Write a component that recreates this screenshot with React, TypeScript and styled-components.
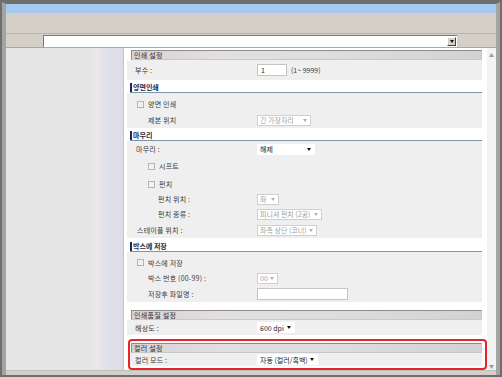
import React from "react";
import styled, { createGlobalStyle } from "styled-components";

const GlobalStyle = createGlobalStyle`
  html, body {
    margin: 0;
    padding: 0;
    background: #ffffff;
  }
  body {
    font-family: "Noto Sans CJK KR", "Noto Sans", sans-serif;
  }
`;

const Frame = styled.div`
  box-sizing: border-box;
  width: 502px;
  height: 377px;
  border: 2px solid #6e6e6e;
  overflow: hidden;
`;

const Window = styled.div`
  box-sizing: border-box;
  height: 100%;
  display: flex;
  flex-direction: column;
  background: #d4d0c8;
  border-top: 2px solid #6e6e6e;
  border-left: 4px solid #a4a4a4;
  border-right: 4px solid #a4a4a4;
`;

const TitleBar = styled.div`
  height: 9px;
  background: #a6c9ef;
`;

const Toolbar = styled.div`
  height: 20px;
  background: #d4d0c8;
  border-bottom: 1px solid #b8b4ac;
`;

const AddressRow = styled.div`
  height: 13px;
  display: flex;
  align-items: center;
  padding-left: 37px;
  border-bottom: 1px solid #a8a8a8;
`;

const Combo = styled.div`
  box-sizing: border-box;
  width: 414px;
  height: 12px;
  background: #ffffff;
  border-top: 1px solid #7a7a7a;
  border-left: 1px solid #7a7a7a;
  display: flex;
  justify-content: flex-end;
  align-items: center;
  padding-right: 1px;
`;

const ComboButton = styled.div`
  box-sizing: border-box;
  width: 9px;
  height: 9px;
  background: #d4d0c8;
  border: 1px solid;
  border-color: #ffffff #404040 #404040 #ffffff;
  display: flex;
  align-items: center;
  justify-content: center;
`;

const Arrow = styled.span<{ $color?: string }>`
  width: 0;
  height: 0;
  border-left: 2.5px solid transparent;
  border-right: 2.5px solid transparent;
  border-top: 3px solid ${(p) => p.$color ?? "#111"};
`;

const Content = styled.div`
  flex: 1;
  display: flex;
  min-height: 0;
`;

const SidePanel = styled.div`
  width: 117px;
  background: linear-gradient(
    to right,
    #e5e5e5 0%,
    #e5e5e5 72%,
    #ebe7eb 78%,
    #e0e0e8 86%,
    #dcdde7 100%
  );
  border-right: 1px solid #c4c4c4;
`;

const MainPanel = styled.div`
  flex: 1;
  display: flex;
  background: #ffffff;
  min-width: 0;
`;

const Sheet = styled.div`
  flex: 1;
  padding: 2px 5px 0 3px;
  display: flex;
  flex-direction: column;
`;

const Scrollbar = styled.div`
  width: 9px;
  background: #f3f3f3;
  display: flex;
  flex-direction: column;
  justify-content: space-between;
  align-items: center;
  padding: 4px 0 2px;
  font-size: 5px;
  color: #9a9a9a;
  line-height: 1;
`;

const GrayHeader = styled.div<{ $indent?: number }>`
  box-sizing: border-box;
  height: 10px;
  margin-left: ${(p) => p.$indent ?? 4}px;
  border: 1px solid;
  border-color: #8c8c8c #c8c8c8 #c8c8c8 #8c8c8c;
  background: linear-gradient(
    to right,
    #d6d2d5 0%,
    #e2dee1 25%,
    #dedede 55%,
    #d2d2d2 100%
  );
  font-size: 7px;
  line-height: 8px;
  color: #333333;
  padding-left: 2px;
  letter-spacing: 0.3px;
`;

const BlueHeader = styled.div<{ $gap: number }>`
  box-sizing: border-box;
  margin-top: ${(p) => p.$gap}px;
  margin-left: 3px;
  height: 11px;
  border-bottom: 1px solid #7f93a8;
  display: flex;
  align-items: center;
  gap: 1px;
  font-size: 7px;
  font-weight: 700;
  color: #1f2c4a;
  &::before {
    content: "";
    width: 2px;
    height: 9px;
    background: #1b2a55;
  }
`;

const Body = styled.div<{ $pt?: number; $bg?: string }>`
  background: ${(p) => p.$bg ?? "#efefef"};
  padding-top: ${(p) => p.$pt ?? 0}px;
`;

const Row = styled.div<{ $h: number; $label?: number }>`
  height: ${(p) => p.$h}px;
  display: grid;
  grid-template-columns: ${(p) => p.$label ?? 130}px auto;
  align-items: center;
`;

const Label = styled.div<{ $indent: number }>`
  padding-left: ${(p) => p.$indent}px;
  font-size: 7px;
  color: #3a3a3a;
  display: flex;
  align-items: center;
  gap: 4px;
  white-space: nowrap;
  letter-spacing: 0.2px;
`;

const Check = styled.span`
  box-sizing: border-box;
  width: 7px;
  height: 7px;
  border: 1px solid #b4b4b4;
  background: #f2f2f2;
`;

const Controls = styled.div`
  display: flex;
  align-items: center;
  gap: 4px;
  font-size: 7px;
  color: #3a3a3a;
`;

const TextBox = styled.div<{ $w: number }>`
  box-sizing: border-box;
  width: ${(p) => p.$w}px;
  height: 12px;
  background: #ffffff;
  border: 1px solid #c4c4c4;
  font-size: 7px;
  line-height: 10px;
  padding-left: 3px;
  color: #222;
`;

const Select = styled.div<{ $w: number; $disabled?: boolean }>`
  box-sizing: border-box;
  width: ${(p) => p.$w}px;
  height: 11px;
  background: #ffffff;
  border: 1px solid ${(p) => (p.$disabled ? "#cfcfcf" : "#ffffff")};
  display: flex;
  align-items: center;
  justify-content: space-between;
  padding: 0 3px 0 2px;
  font-size: 7px;
  color: ${(p) => (p.$disabled ? "#a0a0a0" : "#222222")};
  white-space: nowrap;
`;

const Highlight = styled.div`
  margin: 4px -5px 0 1px;
  border: 2px solid #e8232a;
  border-radius: 4px;
  padding: 2px 3px 2px 0;
`;

const Status = styled.div`
  height: 4px;
  background: #d4d0c8;
  border-top: 1px solid #c0c0c0;
`;

type Opt = { text: string; w: number; disabled?: boolean };

const Drop: React.FC<Opt> = ({ text, w, disabled }) => (
  <Select $w={w} $disabled={disabled}>
    <span>{text}</span>
    <Arrow $color={disabled ? "#b0b0b0" : "#111"} />
  </Select>
);

export default function App() {
  return (
    <>
      <GlobalStyle />
      <Frame>
        <Window>
          <TitleBar />
          <Toolbar />
          <AddressRow>
            <Combo>
              <ComboButton>
                <Arrow />
              </ComboButton>
            </Combo>
          </AddressRow>
          <Content>
            <SidePanel />
            <MainPanel>
              <Sheet>
                <GrayHeader>인쇄 설정</GrayHeader>
                <Body>
                  <Row $h={20}>
                    <Label $indent={8}>부수 :</Label>
                    <Controls>
                      <TextBox $w={30}>1</TextBox>
                      <span>(1~ 9999)</span>
                    </Controls>
                  </Row>
                </Body>

                <BlueHeader $gap={2}>양면인쇄</BlueHeader>
                <Body $pt={3}>
                  <Row $h={16}>
                    <Label $indent={10}>
                      <Check />
                      양면 인쇄
                    </Label>
                  </Row>
                  <Row $h={16}>
                    <Label $indent={21}>제본 위치</Label>
                    <Controls>
                      <Drop text="긴 가장자리" w={54} disabled />
                    </Controls>
                  </Row>
                </Body>

                <BlueHeader $gap={2}>마무리</BlueHeader>
                <Body $pt={1}>
                  <Row $h={14}>
                    <Label $indent={9}>마무리 :</Label>
                    <Controls>
                      <Drop text="해제" w={58} />
                    </Controls>
                  </Row>
                  <Row $h={20}>
                    <Label $indent={21}>
                      <Check />
                      시프트
                    </Label>
                  </Row>
                  <Row $h={16}>
                    <Label $indent={21}>
                      <Check />
                      펀치
                    </Label>
                  </Row>
                  <Row $h={14}>
                    <Label $indent={31}>펀치 위치 :</Label>
                    <Controls>
                      <Drop text="좌" w={22} disabled />
                    </Controls>
                  </Row>
                  <Row $h={16}>
                    <Label $indent={31}>펀치 종류 :</Label>
                    <Controls>
                      <Drop text="피니셔 펀치 (2공)" w={65} disabled />
                    </Controls>
                  </Row>
                  <Row $h={16}>
                    <Label $indent={10}>스테이플 위치 :</Label>
                    <Controls>
                      <Drop text="좌측 상단 (코너)" w={60} disabled />
                    </Controls>
                  </Row>
                </Body>

                <BlueHeader $gap={3}>박스에 저장</BlueHeader>
                <Body $pt={2}>
                  <Row $h={17}>
                    <Label $indent={10}>
                      <Check />
                      박스에 저장
                    </Label>
                  </Row>
                  <Row $h={14}>
                    <Label $indent={21}>박스 번호 (00-99) :</Label>
                    <Controls>
                      <Drop text="00" w={21} disabled />
                    </Controls>
                  </Row>
                  <Row $h={17}>
                    <Label $indent={21}>저장후 파일명 :</Label>
                    <Controls>
                      <TextBox $w={91}></TextBox>
                    </Controls>
                  </Row>
                </Body>

                <GrayHeader style={{ marginTop: 8 }}>인쇄품질 설정</GrayHeader>
                <Body>
                  <Row $h={15}>
                    <Label $indent={8}>해상도 :</Label>
                    <Controls>
                      <Drop text="600 dpi" w={38} />
                    </Controls>
                  </Row>
                </Body>

                <Highlight>
                  <GrayHeader $indent={1}>컬러 설정</GrayHeader>
                  <Body>
                    <Row $h={13} $label={127}>
                      <Label $indent={5}>컬러 모드 :</Label>
                      <Controls>
                        <Drop text="자동 (컬러/흑백)" w={61} />
                      </Controls>
                    </Row>
                  </Body>
                </Highlight>
              </Sheet>
              <Scrollbar>
                <span>▲</span>
                <span>▼</span>
              </Scrollbar>
            </MainPanel>
          </Content>
          <Status />
        </Window>
      </Frame>
    </>
  );
}
